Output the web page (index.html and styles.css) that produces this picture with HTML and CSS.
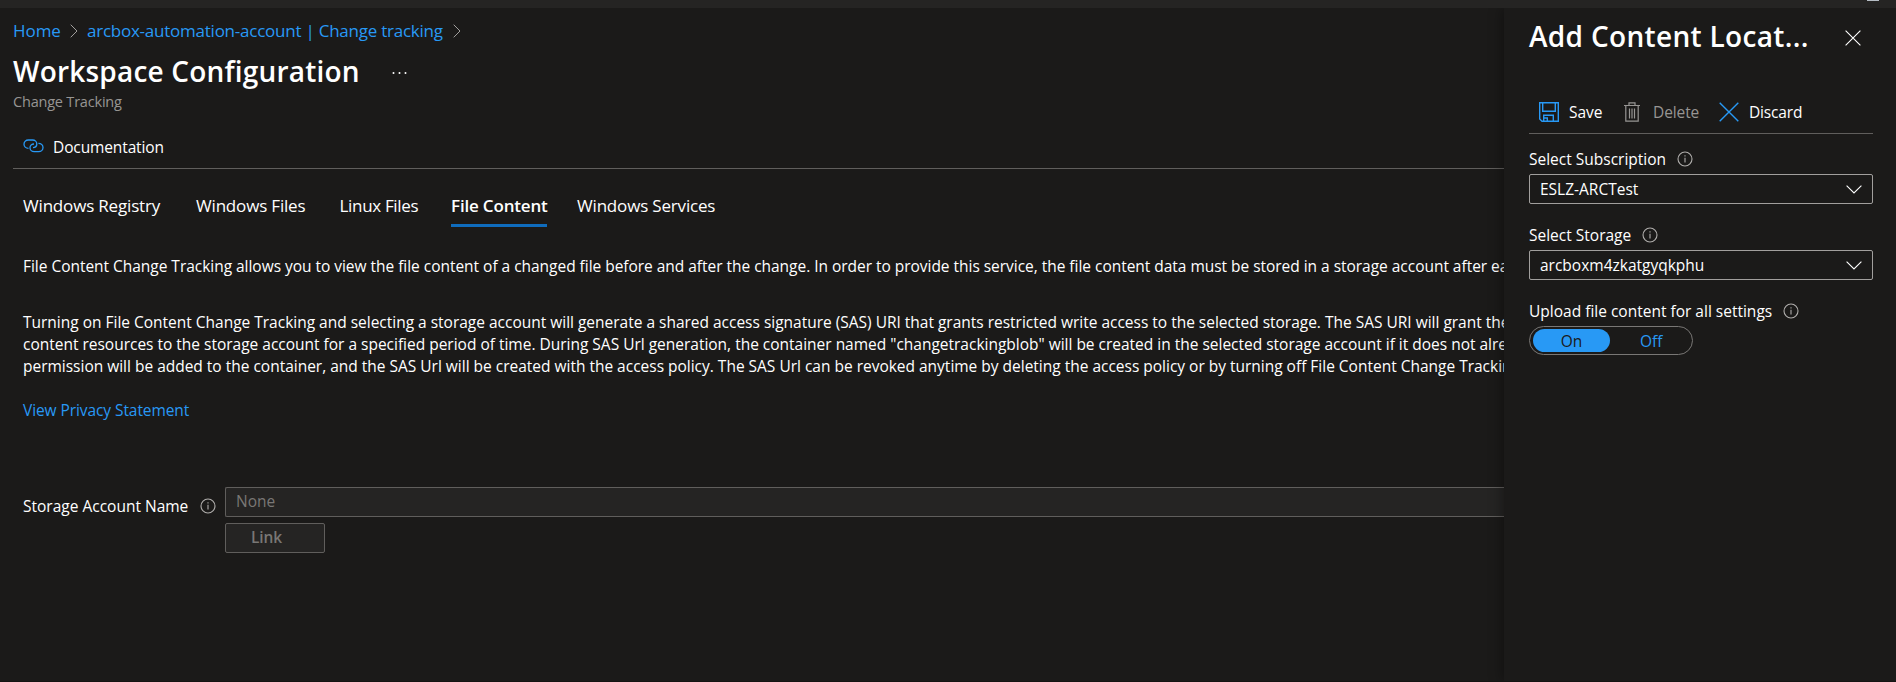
FILE: index.html
```html
<!DOCTYPE html>
<html lang="en">
<head>
<meta charset="utf-8">
<title>Workspace Configuration</title>
<link rel="stylesheet" href="styles.css">
</head>
<body>
<div class="topbar"><span class="avatar"></span></div>
<div class="shell">
  <main class="main">
    <nav class="crumbs">
      <a class="crumb-home">Home</a>
      <svg class="crumb-sep" width="8" height="14" viewBox="0 0 8 14"><path d="M.7.7 7 7 .7 13.3"/></svg>
      <a class="crumb-account">arcbox-automation-account | Change tracking</a>
      <svg class="crumb-sep" width="8" height="14" viewBox="0 0 8 14"><path d="M.7.7 7 7 .7 13.3"/></svg>
    </nav>
    <div class="title-row">
      <h1 class="title">Workspace Configuration</h1>
      <svg class="dots" width="16" height="4" viewBox="0 0 16 4"><circle cx="1.5" cy="2" r="1"/><circle cx="7.5" cy="2" r="1"/><circle cx="13.5" cy="2" r="1"/></svg>
    </div>
    <div class="subtitle"><span>Change Tracking</span></div>
    <div class="commands">
      <svg class="link-icon" width="21" height="14" viewBox="0 0 21 14"><path d="M5.5 9.3C2.800 9.300 1 7.500 1 5.200 1 2.800 2.900 1 5.400 1H9.600C12 1 13.800 2.700 13.800 4.900 13.800 7 12.200 8.600 10 8.600"/><path d="M15.400 4.300C18 4.300 20 6.100 20 8.500S18 12.700 15.600 12.700H11.200C8.800 12.700 7 11 7 8.800S8.700 5 11 5"/></svg>
      <span class="cmd-doc">Documentation</span>
    </div>
    <div class="tabs">
      <span class="tab t1">Windows Registry</span>
      <span class="tab t2">Windows Files</span>
      <span class="tab t3">Linux Files</span>
      <span class="tab t4 active">File Content</span>
      <span class="tab t5">Windows Services</span>
    </div>
    <div class="copy">
      <p class="para first">File Content Change Tracking allows you to view the file content of a changed file before and after the change. In order to provide this service, the file content data must be stored in a storage account after each</p>
      <p class="para">Turning on File Content Change Tracking and selecting a storage account will generate a shared access signature (SAS) URI that grants restricted write access to the selected storage. The SAS URI will grant the<br>content resources to the storage account for a specified period of time. During SAS Url generation, the container named "changetrackingblob" will be created in the selected storage account if it does not already<br>permission will be added to the container, and the SAS Url will be created with the access policy. The SAS Url can be revoked anytime by deleting the access policy or by turning off File Content Change Tracking</p>
      <a class="privacy">View Privacy Statement</a>
    </div>
    <div class="form">
      <div class="form-label"><span>Storage Account Name</span>
        <svg class="info" width="16" height="16" viewBox="0 0 16 16"><circle cx="8" cy="8" r="7"/><path d="M8 6.800V11.500M8 4.300V5.500"/></svg>
      </div>
      <div class="form-fields">
        <div class="input"><span>None</span></div>
        <div class="button"><span>Link</span></div>
      </div>
    </div>
  </main>
  <aside class="panel">
    <div class="panel-head">
      <h2 class="panel-title">Add Content Locat...</h2>
      <svg class="close" width="16" height="16" viewBox="0 0 16 16"><path d="M.6.600 15.400 15.400M15.400.600.600 15.400"/></svg>
    </div>
    <div class="panel-cmds">
      <svg class="blue" width="20" height="20" viewBox="0 0 20 20"><path d="M.7.700H19.300V19.300H3L.700 17ZM3.700.700V9.300H16.300V.700M4.700 19.300V13.300H14.300V19.300M8.300 19V16H5"/></svg>
      <span class="c-save">Save</span>
      <svg class="grey" width="16" height="20" viewBox="0 0 16 20"><path d="M0 3.500H16M5 3V.800H11V3M1.800 4V19.200H14.200V4M5.500 6.500V16.500M8 6.500V16.500M10.500 6.500V16.500"/></svg>
      <span class="c-delete">Delete</span>
      <svg class="blue x" width="20" height="20" viewBox="0 0 20 20"><path d="M.7.700 19.300 19.300M19.300.700.700 19.300"/></svg>
      <span class="c-discard">Discard</span>
    </div>
    <div class="field">
      <div class="label"><span>Select Subscription</span><svg class="info" width="16" height="16" viewBox="0 0 16 16"><circle cx="8" cy="8" r="7"/><path d="M8 6.800V11.500M8 4.300V5.500"/></svg></div>
      <div class="select"><span>ESLZ-ARCTest</span><svg class="caret" width="16" height="9" viewBox="0 0 16 9"><path d="M.6.600 8 8 15.400.600"/></svg></div>
    </div>
    <div class="field">
      <div class="label"><span>Select Storage</span><svg class="info" width="16" height="16" viewBox="0 0 16 16"><circle cx="8" cy="8" r="7"/><path d="M8 6.800V11.500M8 4.300V5.500"/></svg></div>
      <div class="select"><span>arcboxm4zkatgyqkphu</span><svg class="caret" width="16" height="9" viewBox="0 0 16 9"><path d="M.6.600 8 8 15.400.600"/></svg></div>
    </div>
    <div class="field">
      <div class="label"><span>Upload file content for all settings</span><svg class="info" width="16" height="16" viewBox="0 0 16 16"><circle cx="8" cy="8" r="7"/><path d="M8 6.800V11.500M8 4.300V5.500"/></svg></div>
      <div class="toggle"><span class="on">On</span><span class="off">Off</span></div>
    </div>
  </aside>
</div>
<div class="footline"></div>
</body>
</html>
```
FILE: styles.css
```css
* { box-sizing: border-box; }
body {
  margin: 0;
  width: 1896px;
  height: 682px;
  display: flex;
  flex-direction: column;
  overflow: hidden;
  background: #1b1a19;
  color: #fff;
  font-family: "Open Sans", "Noto Sans", sans-serif;
  font-size: 15.5px;
  line-height: 22px;
  white-space: nowrap;
}
h1, h2, p { margin: 0; font-weight: 600; }
svg { flex: none; fill: none; display: block; }
a { color: #2899f5; }

.topbar { height: 8px; flex: none; background: #252423; display: flex; justify-content: flex-end; padding-right: 17px; }
.avatar { width: 12px; height: 1px; background: #b5bcc4; }
.shell { flex: 1; min-height: 0; display: grid; grid-template-columns: 1504px 392px; overflow: hidden; }
.footline { height: 1px; flex: none; background: #151413; }

.main { overflow: hidden; padding-left: 13px; }
.crumbs { height: 46px; display: flex; align-items: center; font-size: 17px; }
.crumb-home { width: 57px; letter-spacing: -.05px; }
.crumb-sep { stroke: #a19f9d; stroke-width: 1; margin-right: 9px; }
.crumb-account { width: 366px; letter-spacing: -.24px; }
.title-row { height: 36px; display: flex; align-items: center; }
.title { font-size: 28px; line-height: 34px; padding-bottom: 2px; width: 379px; letter-spacing: .2px; }
.dots { fill: #fff; margin-top: 2px; }
.subtitle { height: 24px; line-height: 24px; font-size: 14.5px; letter-spacing: -.2px; color: #979593; }
.commands { height: 55px; border-bottom: 1px solid #605e5c; display: flex; align-items: center; padding: 10px 0 0 10px; gap: 9px; }
.link-icon { stroke: #2899f5; stroke-width: 1.3; }
.cmd-doc { letter-spacing: -.12px; padding-top: 2px; }

.tabs { height: 58px; display: flex; padding: 24px 0 0 10px; font-size: 17px; line-height: 26px; letter-spacing: -.18px; }
.tab { height: 34px; }
.t1 { width: 173px; }
.t2 { width: 143.5px; }
.t3 { width: 111.5px; letter-spacing: -.32px; }
.t4 { width: 96px; margin-right: 30px; }
.active { font-weight: 600; border-bottom: 3px solid #0f6cbd; }

.copy { padding: 28px 0 0 10px; height: 260px; }
.para { font-weight: 400; letter-spacing: -.01px; }
.first { margin-bottom: 34px; letter-spacing: -.03px; }
.privacy { display: block; margin-top: 22px; letter-spacing: -.08px; }

.form { display: grid; grid-template-columns: 202px 1fr; padding-left: 10px; }
.form-label { display: flex; justify-content: space-between; padding-right: 9px; height: 37px; align-items: center; }
.info { stroke: #b0aeac; stroke-width: 1.1; }
.form-fields { display: flex; flex-direction: column; gap: 6px; color: #797775; }
.input { height: 30px; border: 1px solid #605e5c; border-right: 0; border-radius: 2px 0 0 2px; background: #252423; padding-left: 10px; line-height: 27px; }
.button { width: 100px; height: 30px; border: 1px solid #605e5c; border-radius: 2px; background: #252423; padding-left: 25px; line-height: 27px; font-weight: 600; letter-spacing: -.1px; }

.panel { position: relative; background: #1b1a19; box-shadow: -2px 0 12px rgba(0, 0, 0, .35); padding: 0 23px 0 25px; }
.panel-head { height: 82px; display: flex; align-items: flex-start; justify-content: space-between; padding: 10px 12px 0 0; }
.panel-title { font-size: 28px; line-height: 36px; letter-spacing: .33px; }
.close { stroke: #fff; stroke-width: 1.1; margin-top: 12px; }
.panel-cmds { height: 44px; border-bottom: 1px solid #605e5c; display: flex; align-items: center; padding: 0 0 0 10px; }
.blue { stroke: #2899f5; stroke-width: 1.4; }
.grey { stroke: #979593; stroke-width: 1.2; }
.c-save { padding-left: 10px; width: 65px; }
.c-delete { color: #979593; width: 79px; padding-left: 13px; letter-spacing: -.1px; }
.c-discard { padding-left: 10px; letter-spacing: -.15px; }
.field { height: 76px; padding-top: 14px; }
.label { height: 26px; display: flex; align-items: flex-start; gap: 11px; }
.label .info { margin-top: 3px; }
.select { height: 30px; border: 1px solid #a19f9d; border-radius: 2px; display: flex; align-items: center; justify-content: space-between; padding: 0 10px; }
.caret { stroke: #fff; stroke-width: 1.1; }
.toggle { width: 164px; height: 29px; border: 1px solid #797775; border-radius: 15px; display: flex; padding: 2px 3px; line-height: 25px; }
.on { flex: none; width: 77px; height: 23px; border-radius: 12px; background: #2899f5; color: #1b1a19; text-align: center; }
.off { padding-left: 30px; color: #2899f5; }
```
